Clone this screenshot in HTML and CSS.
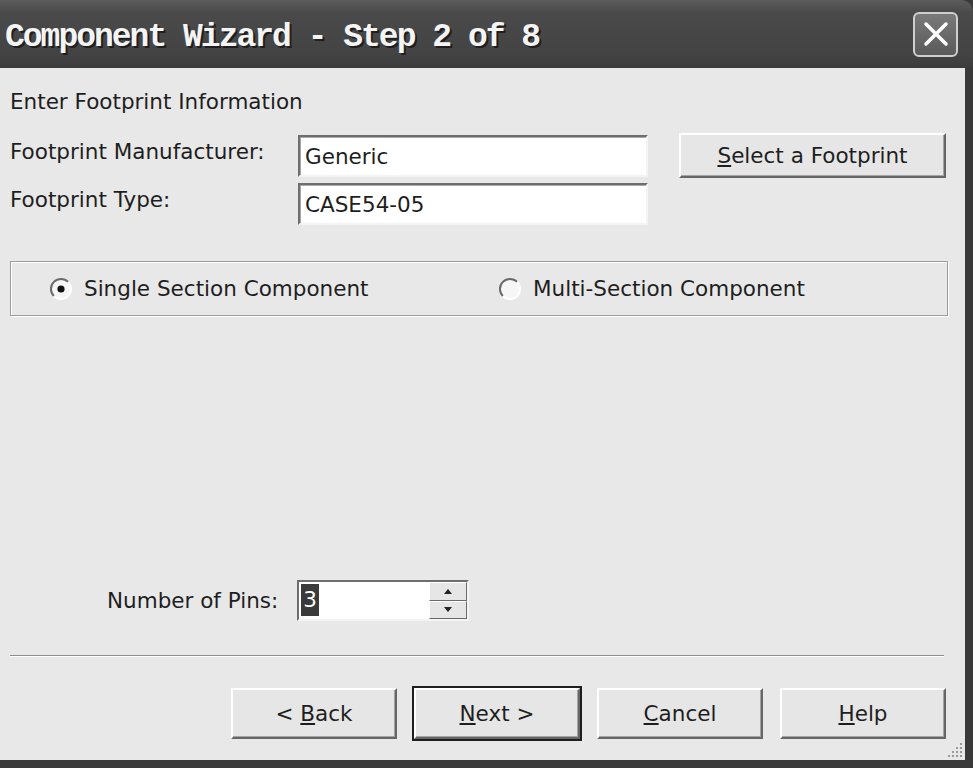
FILE: index.html
```html
<!DOCTYPE html>
<html lang="en">
<head>
    <meta charset="UTF-8">
    <title>Component Wizard - Step 2 of 8</title>
    <link rel="stylesheet" href="styles.css">
</head>
<body>
    <div class="window">
        <div class="titlebar">
            <span class="title">Component Wizard - Step 2 of 8</span>
            <button class="close-button" aria-label="Close">
                <svg width="26" height="26" viewBox="0 0 26 26"><path d="M3 3 L23 23 M23 3 L3 23" stroke="#fff" stroke-width="3.5" stroke-linecap="round"/></svg>
            </button>
        </div>

        <div class="content">
            <p class="intro">Enter Footprint Information</p>

            <div class="fields">
                <label class="field-label">Footprint Manufacturer:</label>
                <div class="textbox">Generic</div>
                <button class="btn btn-select"><u>S</u>elect a Footprint</button>
                <label class="field-label">Footprint Type:</label>
                <div class="textbox">CASE54-05</div>
            </div>

            <div class="section-group">
                <div class="radio-option">
                    <svg class="radio" width="24" height="24" viewBox="0 0 24 24">
                        <circle cx="12" cy="12" r="10" fill="#f6f6f6"/>
                        <path d="M4.9 19.1 A10 10 0 0 1 19.1 4.9" fill="none" stroke="#6a6a6a" stroke-width="2"/>
                        <path d="M19.1 4.9 A10 10 0 0 1 4.9 19.1" fill="none" stroke="#ffffff" stroke-width="2"/>
                        <circle cx="12" cy="12" r="3.6" fill="#111"/>
                    </svg>
                    <span>Single Section Component</span>
                </div>
                <div class="radio-option">
                    <svg class="radio" width="24" height="24" viewBox="0 0 24 24">
                        <circle cx="12" cy="12" r="10" fill="#f6f6f6"/>
                        <path d="M4.9 19.1 A10 10 0 0 1 19.1 4.9" fill="none" stroke="#6a6a6a" stroke-width="2"/>
                        <path d="M19.1 4.9 A10 10 0 0 1 4.9 19.1" fill="none" stroke="#ffffff" stroke-width="2"/>
                    </svg>
                    <span>Multi-Section Component</span>
                </div>
            </div>

            <div class="pins-row">
                <label class="field-label">Number of Pins:</label>
                <div class="spin">
                    <div class="spin-field"><span class="selected">3</span></div>
                    <div class="spin-buttons">
                        <span class="spin-btn"><svg width="8" height="5" viewBox="0 0 8 5"><path d="M4 0 L8 5 L0 5 Z" fill="#222"/></svg></span>
                        <span class="spin-btn"><svg width="8" height="5" viewBox="0 0 8 5"><path d="M0 0 L8 0 L4 5 Z" fill="#222"/></svg></span>
                    </div>
                </div>
            </div>

            <div class="separator"></div>

            <div class="actions">
                <button class="btn">&lt; <u>B</u>ack</button>
                <button class="btn btn-default"><u>N</u>ext &gt;</button>
                <button class="btn"><u>C</u>ancel</button>
                <button class="btn"><u>H</u>elp</button>
            </div>

            <svg class="grip" width="20" height="20" viewBox="0 0 20 20">
                <g fill="#9a9a9a">
                    <rect x="15" y="3" width="2" height="2"/>
                    <rect x="11" y="7" width="2" height="2"/><rect x="15" y="7" width="2" height="2"/>
                    <rect x="7" y="11" width="2" height="2"/><rect x="11" y="11" width="2" height="2"/><rect x="15" y="11" width="2" height="2"/>
                    <rect x="3" y="15" width="2" height="2"/><rect x="7" y="15" width="2" height="2"/><rect x="11" y="15" width="2" height="2"/><rect x="15" y="15" width="2" height="2"/>
                </g>
            </svg>
        </div>
    </div>
</body>
</html>
```

FILE: styles.css
```css
body {
    margin: 0;
    font-family: "DejaVu Sans", sans-serif;
    font-size: 21.5px;
    color: #1e1e1e;
    background-color: #3a3a3a;
}
.window {
    height: 768px;
    display: flex;
    flex-direction: column;
    background-color: #3a3a3a;
}
.titlebar {
    height: 68px;
    flex: none;
    display: flex;
    align-items: center;
    justify-content: space-between;
    padding: 0 15px 0 5px;
    border-radius: 0 12px 0 0;
    background: linear-gradient(#5c5c5c, #4a4a4a 18%, #434343 80%, #3c3c3c);
}
.title {
    font-family: "Liberation Mono", monospace;
    font-weight: bold;
    font-size: 33px;
    letter-spacing: -2px;
    color: #f4f4f4;
    text-shadow: 2px 2px 0 #1e1e1e;
    padding-top: 7px;
}
.close-button {
    width: 45px;
    height: 45px;
    padding: 0;
    display: flex;
    align-items: center;
    justify-content: center;
    border: 2px solid #cfcfcf;
    border-radius: 6px;
    background: linear-gradient(#7a7a7a, #5a5a5a);
}
.content {
    flex: 1;
    position: relative;
    margin: 0 8px 8px 0;
    padding: 22px 0 0 10px;
    background-color: #e8e8e8;
}
.intro {
    margin: 0 0 21px;
    line-height: 24px;
}
.field-label {
    line-height: 24px;
}
.fields {
    display: grid;
    grid-template-columns: 288px 350px 298px;
    grid-template-rows: 42px 42px;
    row-gap: 6px;
}
.fields .field-label {
    padding-top: 5px;
}
.textbox {
    display: flex;
    align-items: center;
    padding-left: 5px;
    background: #ffffff;
    border: 2px solid;
    border-color: #6e6e6e #f4f4f4 #f4f4f4 #6e6e6e;
    box-shadow: inset 1px 1px 0 #a8a8a8;
}
.btn {
    width: 166px;
    height: 51px;
    font-family: inherit;
    font-size: 21.5px;
    color: #1e1e1e;
    background: #e6e6e6;
    border: 2px solid;
    border-color: #ffffff #666666 #666666 #ffffff;
    box-shadow: inset -1px -1px 0 #a4a4a4;
    padding: 0;
}
.btn-select {
    width: 267px;
    height: 45px;
    margin: -2px 0 0 31px;
}
.btn-default {
    outline: 2px solid #1e1e1e;
}
.section-group {
    width: 938px;
    height: 55px;
    box-sizing: border-box;
    margin-top: 36px;
    display: flex;
    align-items: center;
    padding-left: 38px;
    border: 1px solid #9c9c9c;
    box-shadow: inset 1px 1px 0 #ffffff, 1px 1px 0 #ffffff;
}
.radio-option {
    width: 451px;
    display: flex;
    align-items: center;
    gap: 11px;
}
.pins-row {
    margin-top: 264px;
    display: flex;
    align-items: center;
    gap: 19px;
    padding-left: 97px;
}
.spin {
    width: 172px;
    height: 41px;
    box-sizing: border-box;
    display: flex;
    background: #ffffff;
    border: 2px solid;
    border-color: #6e6e6e #f4f4f4 #f4f4f4 #6e6e6e;
}
.spin-field {
    flex: 1;
    padding: 2px 0 0 2px;
}
.selected {
    display: inline-block;
    padding: 0 2px;
    line-height: 32px;
    background: #3a3a3a;
    color: #ffffff;
}
.spin-buttons {
    width: 38px;
    display: flex;
    flex-direction: column;
}
.spin-btn {
    flex: 1;
    display: flex;
    align-items: center;
    justify-content: center;
    background: #e6e6e6;
    border: 1px solid;
    border-color: #ffffff #6a6a6a #6a6a6a #ffffff;
}
.separator {
    margin: 34px 21px 0 0;
    border-top: 1px solid #8c8c8c;
    border-bottom: 1px solid #ffffff;
}
.actions {
    margin-top: 31px;
    display: flex;
    justify-content: flex-end;
    gap: 17px;
    padding-right: 19px;
}
.grip {
    position: absolute;
    right: 0;
    bottom: 0;
}
```
